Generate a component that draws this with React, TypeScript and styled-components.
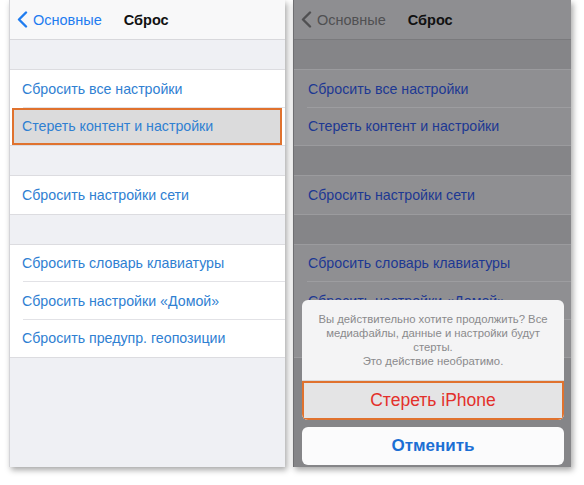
import React from 'react';
import styled, { createGlobalStyle } from 'styled-components';

const GlobalStyle = createGlobalStyle`
  body {
    margin: 0;
    background: #ffffff;
    font-family: "Liberation Sans", Arial, sans-serif;
  }
`;

const Page = styled.div`
  display: flex;
  gap: 8px;
  padding-left: 9px;
  width: 584px;
  height: 485px;
  box-sizing: border-box;
`;

const Phone = styled.div<{ $dim?: boolean }>`
  position: relative;
  width: ${p => (p.$dim ? '277px' : '275px')};
  height: 467px;
  display: flex;
  flex-direction: column;
  background: ${p => (p.$dim ? '#88888b' : '#eff0f4')};
  border-left: 1px solid ${p => (p.$dim ? '#6f6f72' : '#d4d4d8')};
  box-shadow: 2px 3px 6px rgba(0, 0, 0, 0.35);
  overflow: hidden;
`;

const NavBar = styled.div<{ $dim?: boolean }>`
  height: 40px;
  flex: none;
  display: flex;
  align-items: center;
  padding-left: 7px;
  background: ${p => (p.$dim ? '#8e8e91' : '#f8f8f9')};
  border-bottom: 1px solid ${p => (p.$dim ? '#7a7a7d' : '#d8d8dc')};
  box-sizing: border-box;
`;

const Back = styled.div<{ $dim?: boolean }>`
  display: flex;
  align-items: center;
  gap: 5px;
  font-size: 14.5px;
  color: ${p => (p.$dim ? '#505052' : '#1f7cf0')};
  svg {
    width: 11px;
    height: 17px;
  }
`;

const Title = styled.div`
  margin-left: 22px;
  font-size: 14.5px;
  font-weight: bold;
  color: #111;
`;

const Band = styled.div<{ $h: number; $dim?: boolean }>`
  height: ${p => p.$h}px;
  flex: none;
  background: ${p => (p.$dim ? '#858588' : '#eff0f4')};
`;

const Group = styled.div<{ $dim?: boolean }>`
  flex: none;
  display: flex;
  flex-direction: column;
  background: ${p => (p.$dim ? '#8f8f92' : '#ffffff')};
  border-top: 1px solid ${p => (p.$dim ? '#9b9b9e' : '#dcdce0')};
  border-bottom: 1px solid ${p => (p.$dim ? '#9b9b9e' : '#dcdce0')};
`;

const Row = styled.div<{ $dim?: boolean; $marked?: boolean; $last?: boolean }>`
  position: relative;
  height: 37.5px;
  display: flex;
  align-items: center;
  font-size: 14.2px;
  color: ${p => (p.$dim ? '#1d3892' : '#2f80d2')};
  background: ${p => (p.$marked ? '#dbdbdc' : 'transparent')};
  outline: ${p => (p.$marked ? '2px solid #e0722e' : 'none')};
  outline-offset: -2px;
  margin: ${p => (p.$marked ? '0 3px 0 2px' : '0')};
  padding-left: ${p => (p.$marked ? '10px' : p.$dim ? '14px' : '12px')};
  &::after {
    content: '';
    display: ${p => (p.$last || p.$marked ? 'none' : 'block')};
    position: absolute;
    left: 13px;
    right: 0;
    bottom: 0;
    height: 1px;
    background: ${p => (p.$dim ? '#9d9da0' : '#e2e2e6')};
  }
`;

const Sheet = styled.div`
  position: absolute;
  left: 8px;
  right: 7px;
  bottom: 2px;
  display: flex;
  flex-direction: column;
  gap: 7px;
`;

const SheetCard = styled.div`
  display: flex;
  flex-direction: column;
  border-radius: 6px;
  overflow: hidden;
  background: #f4f4f5;
`;

const Message = styled.div`
  height: 81px;
  box-sizing: border-box;
  padding-top: 12px;
  display: flex;
  flex-direction: column;
  align-items: center;
  font-size: 11.3px;
  color: #8a8a8c;
  border-bottom: 1px solid #d8d8da;
`;

const MessageLine = styled.div`
  height: 14px;
  line-height: 14px;
  white-space: nowrap;
`;

const SheetButton = styled.div<{ $danger?: boolean }>`
  height: ${p => (p.$danger ? '39px' : '38px')};
  display: flex;
  align-items: center;
  justify-content: center;
  font-size: ${p => (p.$danger ? '17.5px' : '17px')};
  font-weight: ${p => (p.$danger ? 'normal' : 'bold')};
  color: ${p => (p.$danger ? '#e3302b' : '#1b6fd4')};
  background: ${p => (p.$danger ? '#e4e4e5' : '#fbfbfc')};
  outline: ${p => (p.$danger ? '2px solid #e0722e' : 'none')};
  outline-offset: -2px;
  border-radius: ${p => (p.$danger ? '0' : '6px')};
`;

const Chevron = () => (
  <svg viewBox="0 0 11 17" fill="none">
    <path d="M9 1.5 L2 8.5 L9 15.5" stroke="currentColor" strokeWidth="2.4" strokeLinecap="round" strokeLinejoin="round" />
  </svg>
);

const groups = [
  ['Сбросить все настройки', 'Стереть контент и настройки'],
  ['Сбросить настройки сети'],
  ['Сбросить словарь клавиатуры', 'Сбросить настройки «Домой»', 'Сбросить предупр. геопозиции'],
];

const message = [
  'Вы действительно хотите продолжить? Все',
  'медиафайлы, данные и настройки будут',
  'стерты.',
  'Это действие необратимо.',
];

const Screen = ({ dim }: { dim?: boolean }) => (
  <Phone $dim={dim}>
    <NavBar $dim={dim}>
      <Back $dim={dim}>
        <Chevron />
        Основные
      </Back>
      <Title>Сброс</Title>
    </NavBar>
    {groups.map((rows, gi) => (
      <React.Fragment key={gi}>
        <Band $h={29} $dim={dim} />
        <Group $dim={dim}>
          {rows.map((r, ri) => (
            <Row
              key={r}
              $dim={dim}
              $marked={!dim && gi === 0 && ri === 1}
              $last={ri === rows.length - 1}
            >
              {r}
            </Row>
          ))}
        </Group>
      </React.Fragment>
    ))}
    <Band $h={120} $dim={dim} />
    {dim && (
      <Sheet>
        <SheetCard>
          <Message>
            {message.map(line => (
              <MessageLine key={line}>{line}</MessageLine>
            ))}
          </Message>
          <SheetButton $danger>Стереть iPhone</SheetButton>
        </SheetCard>
        <SheetButton>Отменить</SheetButton>
      </Sheet>
    )}
  </Phone>
);

export default function App() {
  return (
    <>
      <GlobalStyle />
      <Page>
        <Screen />
        <Screen dim />
      </Page>
    </>
  );
}
